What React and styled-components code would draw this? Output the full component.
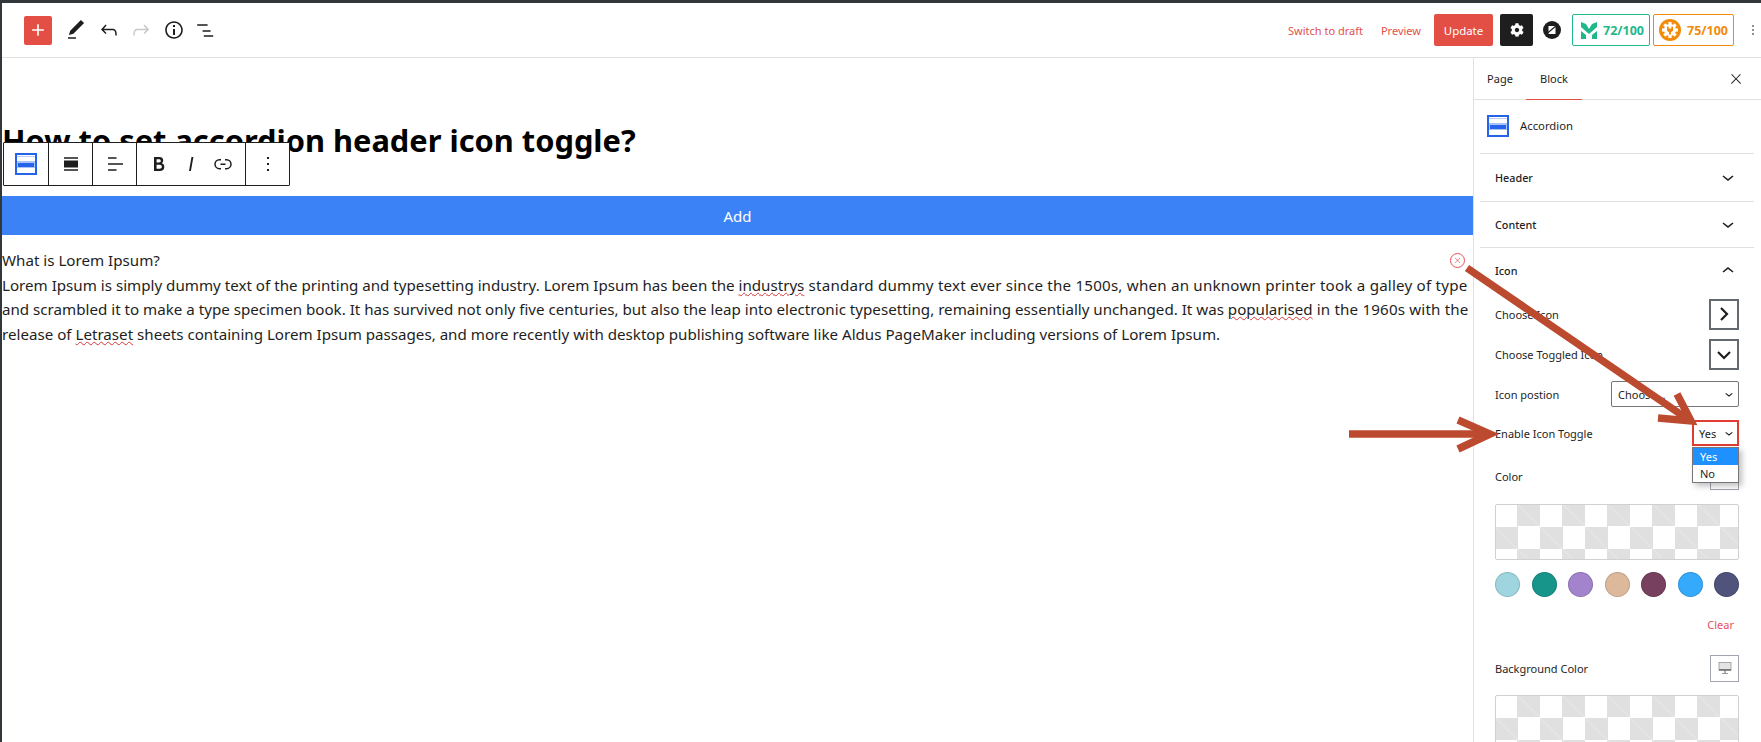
import React from "react";
import styled, { createGlobalStyle } from "styled-components";
import { FaCog } from "react-icons/fa";

const Global = createGlobalStyle`
  html, body { margin: 0; padding: 0; background: #fff; }
  body { font-family: "Noto Sans", "Open Sans", sans-serif; color: #1e1e1e; overflow: hidden; }
  * { box-sizing: border-box; }
`;

const Icon = ({ d, size = 24, color = "currentColor" }) => (
  <svg width={size} height={size} viewBox="0 0 24 24" fill={color}><path d={d} /></svg>
);

const icons = {
  edit: "M20.1 5.1L16.9 2 6.2 12.7l-1.3 4.4 4.5-1.3L20.1 5.1zM4 20.8h8v-1.5H4v1.5z",
  undo: "M18.3 11.7c-.6-.6-1.4-.9-2.3-.9H6.7l2.9-3.3-1.1-1-4.5 5L8.5 16l1-1-2.7-2.7H16c.5 0 .9.2 1.3.5 1 1 1 3.4 1 4.5v.3h1.5v-.2c0-1.5 0-4.3-1.5-5.7z",
  redo: "M15.6 6.5l-1.1 1 2.9 3.3H8c-.9 0-1.7.3-2.3.9-1.4 1.5-1.4 4.2-1.4 5.6v.2h1.5v-.3c0-1.1 0-3.5 1-4.5.3-.3.7-.5 1.3-.5h9.2L14.5 15l1.1 1.1 4.6-4.6-4.6-5z",
  info: "M12 3.2c-4.8 0-8.8 3.9-8.8 8.8 0 4.8 3.9 8.8 8.8 8.8 4.8 0 8.8-3.9 8.8-8.8 0-4.8-4-8.8-8.8-8.8zm0 16c-4 0-7.2-3.3-7.2-7.2C4.8 8 8 4.8 12 4.8s7.2 3.3 7.2 7.2c0 4-3.2 7.2-7.2 7.2zM11 17h2v-6h-2v6zm0-8h2V7h-2v2z",
  list: "M3.2 6.2h10.4v1.5H3.2zM8.6 12.2h8v1.5h-8zM9.8 17.2h9.4v1.5H9.8z",
  plus: "M11 5h2v6h6v2h-6v6h-2v-6H5v-2h6z",
  more: "M13 19h-2v-2h2v2zm0-6h-2v-2h2v2zm0-6h-2V5h2v2z",
  bold: "M14.7 11.3c1-.6 1.5-1.6 1.5-3 0-2.3-1.3-3.4-4-3.4H7v14h5.8c1.4 0 2.5-.3 3.3-1 .8-.7 1.2-1.7 1.2-2.9.1-1.9-.8-3.1-2.6-3.7zm-5.1-4h2.3c.6 0 1.1.1 1.4.4.3.3.5.7.5 1.2s-.2 1-.5 1.2c-.3.3-.8.4-1.4.4H9.6V7.3zm4.6 9c-.4.3-1 .4-1.7.4H9.6v-3.9h2.9c.7 0 1.3.2 1.7.5.4.3.6.8.6 1.5s-.2 1.2-.6 1.5z",
  italic: "M12.5 5L10 19h1.9l2.5-14z",
  link: "M10 17.389H8.444A5.194 5.194 0 1 1 8.444 7H10v1.5H8.444a3.694 3.694 0 0 0 0 7.389H10v1.5ZM14 7h1.556a5.194 5.194 0 0 1 0 10.39H14v-1.5h1.556a3.694 3.694 0 0 0 0-7.39H14V7Zm-4.5 6h5v-1.5h-5V13Z",
  close: "M13 11.8l6.1-6.3-1-1-6.1 6.2-6.1-6.2-1 1 6.1 6.3-6.5 6.7 1 1 6.5-6.6 6.5 6.6 1-1z",
  down: "M17.5 11.6L12 16l-5.5-4.4.9-1.2L12 14l4.5-3.6 1 1.2z",
  up: "M6.5 12.4L12 8l5.5 4.4-.9 1.2L12 10l-4.5 3.6-1-1.2z",
  blockWide: "M5 5.2h14v1.5H5zM5 8.5h14v7H5zM5 17.3h14v1.5H5z",
  alignLeft: "M5 5.2h8.5v1.5H5zM5 11.2h15v1.5H5zM5 17.3h8.5v1.5H5z",
};

const Page = styled.div`
  position: relative;
  width: 1761px;
  height: 742px;
  overflow: hidden;
  border-top: 3px solid #32373c;
  border-left: 2px solid #32373c;
`;

const Header = styled.header`
  height: 55px;
  border-bottom: 1px solid #e0e0e0;
  display: flex;
  align-items: center;
  justify-content: space-between;
  padding: 0 0 0 22px;
`;

const Tools = styled.div`
  display: flex;
  align-items: center;
`;

const AddButton = styled.div`
  width: 28px;
  height: 29px;
  border-radius: 2px;
  background: #e34f45;
  color: #fff;
  display: flex;
  align-items: center;
  justify-content: center;
  margin-right: 8px;
`;

const ToolIcon = styled.div`
  width: 32.5px;
  display: flex;
  justify-content: center;
  color: ${(p) => (p.$off ? "#c9c9c9" : "#1e1e1e")};
`;

const Actions = styled.div`
  display: flex;
  align-items: center;
`;

const LinkText = styled.span`
  font-size: 11px;
  color: #e2504c;
  margin-right: ${(p) => p.$gap}px;
`;

const UpdateButton = styled.div`
  width: 59px;
  height: 32px;
  border-radius: 2px;
  background: #e34f45;
  color: #fff;
  font-size: 11.4px;
  display: flex;
  align-items: center;
  justify-content: center;
  margin-right: 7px;
`;

const GearButton = styled.div`
  width: 33px;
  height: 32px;
  border-radius: 2px;
  background: #1e1e1e;
  color: #fff;
  display: flex;
  align-items: center;
  justify-content: center;
  margin-right: 10px;
`;

const ScoreBox = styled.div`
  height: 32px;
  width: ${(p) => p.$w}px;
  border: 1px solid ${(p) => p.$color};
  border-radius: 2px;
  color: ${(p) => p.$color};
  font-size: 12.5px;
  font-weight: 700;
  display: flex;
  align-items: center;
  justify-content: space-between;
  padding: 0 5px 0 ${(p) => p.$pad}px;
  margin-right: ${(p) => p.$gap}px;
`;

const MoreDots = styled.div`
  width: 16px;
  display: flex;
  justify-content: center;
`;

const Main = styled.div`
  display: flex;
  height: 684px;
`;

const Editor = styled.main`
  flex: 1;
  min-width: 0;
  padding-top: 60px;
`;

const Title = styled.h1`
  position: relative;
  margin: 0;
  font-size: 30.8px;
  line-height: 44px;
  font-weight: 700;
  color: #000;
  white-space: nowrap;
`;

const BlockToolbar = styled.div`
  position: absolute;
  left: 1px;
  top: 24px;
  height: 44px;
  display: flex;
  background: #fff;
  border: 1px solid #1e1e1e;
  border-radius: 1px;
`;

const ToolCell = styled.div`
  width: ${(p) => p.$w}px;
  display: flex;
  align-items: center;
  justify-content: center;
  gap: 8px;
  color: #1e1e1e;
  & + & { border-left: 1px solid #1e1e1e; }
`;

const AddBar = styled.div`
  margin-top: 34px;
  height: 39px;
  background: #3b82f6;
  color: #fff;
  font-size: 15px;
  display: flex;
  align-items: center;
  justify-content: center;
`;

const Body = styled.div`
  position: relative;
  padding-top: 13px;
  font-size: 15.15px;
  line-height: 24.7px;
  color: #1e1e1e;
  white-space: nowrap;
`;

const Wavy = styled.span`
  text-decoration: underline wavy #d63638 1px;
`;

const Stretched = styled.span`
  letter-spacing: ${(p) => p.$by}px;
`;

const RemoveMark = styled.div`
  position: absolute;
  right: 8px;
  top: 18px;
  width: 15px;
  height: 15px;
  border: 1px solid #e8505b;
  border-radius: 50%;
  color: #e8505b;
  display: flex;
  align-items: center;
  justify-content: center;
`;

const Sidebar = styled.aside`
  width: 288px;
  flex: none;
  border-left: 1px solid #e0e0e0;
  font-size: 11px;
`;

const Tabs = styled.div`
  height: 42px;
  border-bottom: 1px solid #e0e0e0;
  display: flex;
  align-items: stretch;
  padding: 0 17px 0 0;
`;

const Tab = styled.div`
  width: ${(p) => p.$w}px;
  display: flex;
  align-items: center;
  justify-content: center;
  font-size: 11px;
  margin-bottom: -1px;
  border-bottom: 1px solid ${(p) => (p.$on ? "#e34f45" : "transparent")};
`;

const CloseBox = styled.div`
  margin-left: auto;
  display: flex;
  align-items: center;
`;

const BlockCard = styled.div`
  height: 54px;
  margin: 0 7px 0 6px;
  padding: 0 0 2px 7px;
  display: flex;
  align-items: center;
  gap: 11px;
  font-size: 11.3px;
  border-bottom: 1px solid #e0e0e0;
`;

const Panel = styled.div`
  margin: 0 7px 0 6px;
  height: 46.5px;
  padding: 0 14px 0 15px;
  display: flex;
  align-items: center;
  justify-content: space-between;
  font-size: 10.8px;
  font-weight: 500;
  & + & { border-top: 1px solid #e0e0e0; }
`;

const PanelBody = styled.div`
  margin: 0 7px;
  padding: 0 15px 0 14px;
  display: flex;
  flex-direction: column;
`;

const Row = styled.div`
  height: ${(p) => p.$h}px;
  padding-bottom: ${(p) => p.$pb || 0}px;
  flex: none;
  display: flex;
  align-items: center;
  justify-content: space-between;
`;

const IconPick = styled.div`
  width: 30px;
  height: 31px;
  border: 2px solid #646970;
  display: flex;
  align-items: center;
  justify-content: center;
  color: #1e1e1e;
`;

const Select = styled.div`
  position: relative;
  width: ${(p) => p.$w}px;
  height: 26px;
  padding: 0 1px 0 6px;
  border: ${(p) => (p.$open ? "1px solid #e03c31" : "1px solid #757575")};
  border-radius: ${(p) => (p.$open ? 0 : 2)}px;
  display: flex;
  align-items: center;
  justify-content: space-between;
  outline: ${(p) => (p.$open ? "1px solid #e03c31" : "none")};
  outline-offset: -2px;
`;

const Options = styled.div`
  position: absolute;
  left: -1px;
  right: -1px;
  top: 26px;
  background: #fff;
  border: 1px solid #767676;
  box-shadow: 3px 3px 6px rgba(0, 0, 0, 0.25);
  z-index: 2;
`;

const Option = styled.div`
  height: 17px;
  padding-left: 7px;
  display: flex;
  align-items: center;
  color: ${(p) => (p.$on ? "#fff" : "#1e1e1e")};
  background: ${(p) => (p.$on ? "#1e90ff" : "transparent")};
`;

const DeviceButton = styled.div`
  width: 29px;
  height: 27px;
  border: 1px solid #a0a5b0;
  display: flex;
  align-items: center;
  justify-content: center;
`;

const Checker = styled.div`
  height: ${(p) => p.$h}px;
  flex: none;
  border: 1px solid #d0d0d0;
  border-radius: 2px;
  background-color: #fff;
  background-image:
    linear-gradient(45deg, transparent 49.5%, rgba(255, 255, 255, 0.3) 49.5%, rgba(255, 255, 255, 0.3) 50.5%, transparent 50.5%),
    repeating-conic-gradient(#e0e0e0 0 25%, #fff 0 50%);
  background-size: 45px 45px;
  background-position: 22.5px 0, 0 0;
  background-origin: border-box;
`;

const Swatches = styled.div`
  display: flex;
  justify-content: space-between;
  margin-top: 12px;
`;

const Swatch = styled.div`
  width: 25px;
  height: 25px;
  border-radius: 50%;
  background: ${(p) => p.$color};
  box-shadow: inset 0 0 0 1px rgba(0, 0, 0, 0.14);
`;

const ClearLink = styled.div`
  align-self: flex-end;
  margin: 20px 5px 8px 0;
  color: #e8505b;
  font-size: 11px;
  line-height: 16px;
`;

const Notes = styled.svg`
  position: absolute;
  left: -2px;
  top: -3px;
  pointer-events: none;
  z-index: 3;
`;

const EdgeMark = styled.div`
  position: absolute;
  left: -2px;
  top: ${(p) => p.$top}px;
  width: 2px;
  height: ${(p) => p.$h}px;
  background: #e34f45;
`;

const AccordionIcon = () => (
  <svg width="22" height="22" viewBox="0 0 22 22">
    <rect x="1" y="1" width="20" height="20" fill="#fff" stroke="#2563eb" strokeWidth="2" />
    <rect x="2" y="3" width="18" height="1" fill="#bcd0f7" />
    <rect x="2" y="8" width="18" height="7" fill="#a9c3f5" />
    <rect x="3" y="10" width="16" height="4" fill="#2563eb" />
  </svg>
);

const GreenMark = () => (
  <svg width="16" height="17" viewBox="0 0 16 17" fill="#1fb88a">
    <path d="M0 0l5 2 3 5 3-5 5-2v5l-8 7-8-7z" />
    <path d="M0 9l5 4v4H0zM16 9v8h-5v-4z" />
  </svg>
);

const OrangeMark = () => (
  <svg width="22" height="22" viewBox="0 0 22 22">
    <circle cx="11" cy="11" r="11" fill="#f28a0a" />
    <g fill="#fff">
      <circle cx="11" cy="11" r="6" />
      {[0, 45, 90, 135, 180, 225, 270, 315].map((a) => (
        <rect key={a} x="9.4" y="3" width="3.2" height="4" transform={`rotate(${a} 11 11)`} />
      ))}
    </g>
    <path d="M8 7.5h1.6v2h2.8v-2H14v4.2l-2 1.5v2.3h-2v-2.3l-2-1.5z" fill="#f28a0a" />
  </svg>
);

const ZeroMark = () => (
  <svg width="18" height="18" viewBox="0 0 18 18" style={{ marginRight: 11 }}>
    <circle cx="9" cy="9" r="9" fill="#1e1e1e" />
    <path d="M5.5 5h7v1.6L7.5 11.5 5.5 13zM12.5 13h-7v-.4l7-6z" fill="#fff" />
    <path d="M4 12.5L13.5 4.5" stroke="#1e1e1e" strokeWidth="1.2" />
  </svg>
);

const Device = () => (
  <svg width="14" height="14" viewBox="0 0 14 14">
    <rect x="1" y="1.5" width="12" height="8" fill="#e4e4e4" stroke="#8a8a8a" strokeWidth="0.7" />
    <path d="M1 8h12v1.5H1zM4 12h6v.8H4zM6.4 9.5h1.2V12H6.4z" fill="#777" />
  </svg>
);

const Chevron = ({ dir = "down", size = 24 }) => <Icon d={icons[dir]} size={size} />;

const App = () => (
  <>
    <Global />
    <Page>
      <Header>
        <Tools>
          <AddButton><Icon d={icons.plus} size={20} /></AddButton>
          <ToolIcon><Icon d={icons.edit} /></ToolIcon>
          <ToolIcon><Icon d={icons.undo} /></ToolIcon>
          <ToolIcon $off><Icon d={icons.redo} /></ToolIcon>
          <ToolIcon><Icon d={icons.info} /></ToolIcon>
          <ToolIcon><Icon d={icons.list} /></ToolIcon>
        </Tools>
        <Actions>
          <LinkText $gap={18}>Switch to draft</LinkText>
          <LinkText $gap={13}>Preview</LinkText>
          <UpdateButton>Update</UpdateButton>
          <GearButton><FaCog size={14} /></GearButton>
          <ZeroMark />
          <ScoreBox $w={78} $color="#1fb88a" $pad={8} $gap={3}><GreenMark />72/100</ScoreBox>
          <ScoreBox $w={81} $color="#f28a0a" $pad={5} $gap={11}><OrangeMark />75/100</ScoreBox>
          <MoreDots><Icon d={icons.more} /></MoreDots>
        </Actions>
      </Header>
      <Main>
        <Editor>
          <Title>
            How to set accordion header icon toggle?
            <BlockToolbar>
              <ToolCell $w={44}><AccordionIcon /></ToolCell>
              <ToolCell $w={44}><Icon d={icons.blockWide} /></ToolCell>
              <ToolCell $w={44}><Icon d={icons.alignLeft} /></ToolCell>
              <ToolCell $w={109}>
                <Icon d={icons.bold} />
                <Icon d={icons.italic} />
                <Icon d={icons.link} />
              </ToolCell>
              <ToolCell $w={44}><Icon d={icons.more} /></ToolCell>
            </BlockToolbar>
          </Title>
          <AddBar>Add</AddBar>
          <Body>
            What is Lorem Ipsum?<br />
            Lorem Ipsum is simply dummy text of the printing and typesetting industry. Lorem Ipsum has been the <Wavy>industrys</Wavy><Stretched $by={0.21}> standard dummy text ever since the 1500s, when an unknown printer took a galley of type</Stretched><br />
            and scrambled it to make a type specimen book. It has survived not only five centuries, but also the leap into electronic typesetting, remaining essentially unchanged. It was <Wavy>popularised</Wavy><Stretched $by={0.17}> in the 1960s with the</Stretched><br />
            release of <Wavy>Letraset</Wavy> sheets containing Lorem Ipsum passages, and more recently with desktop publishing software like Aldus PageMaker including versions of Lorem Ipsum.
            <RemoveMark><Icon d={icons.close} size={9} /></RemoveMark>
          </Body>
        </Editor>
        <Sidebar>
          <Tabs>
            <Tab $w={52}>Page</Tab>
            <Tab $w={56} $on>Block</Tab>
            <CloseBox><Icon d={icons.close} size={16} /></CloseBox>
          </Tabs>
          <BlockCard><AccordionIcon />Accordion</BlockCard>
          <Panel>Header<Chevron /></Panel>
          <Panel>Content<Chevron /></Panel>
          <Panel>Icon<Chevron dir="up" /></Panel>
          <PanelBody>
            <Row $h={41.5}>Choose Icon
              <IconPick><svg width="16" height="16" viewBox="0 0 16 16" fill="none" stroke="#1e1e1e" strokeWidth="2.2"><path d="M5 2l6 6-6 6" /></svg></IconPick>
            </Row>
            <Row $h={39}>Choose Toggled Icon
              <IconPick><svg width="16" height="16" viewBox="0 0 16 16" fill="none" stroke="#1e1e1e" strokeWidth="2.2"><path d="M2 5l6 6 6-6" /></svg></IconPick>
            </Row>
            <Row $h={40}>Icon postion
              <Select $w={128}>Choose...<Chevron size={16} /></Select>
            </Row>
            <Row $h={38}>Enable Icon Toggle
              <Select $w={47} $open>Yes<Chevron size={16} />
                <Options>
                  <Option $on>Yes</Option>
                  <Option>No</Option>
                </Options>
              </Select>
            </Row>
            <Row $h={52} $pb={4}>Color
              <DeviceButton><Device /></DeviceButton>
            </Row>
            <Checker $h={56} />
            <Swatches>
              {["#9ed5df", "#17958a", "#a283cc", "#dcb99b", "#78405f", "#35a9fb", "#50537c"].map((c) => (
                <Swatch key={c} $color={c} />
              ))}
            </Swatches>
            <ClearLink>Clear</ClearLink>
            <Row $h={54}>Background Color
              <DeviceButton><Device /></DeviceButton>
            </Row>
            <Checker $h={56} />
          </PanelBody>
        </Sidebar>
      </Main>
      <EdgeMark $top={174} $h={9} />
      <EdgeMark $top={193} $h={12} />
      <Notes width="1761" height="742" viewBox="0 0 1761 742" fill="none" stroke="#bc4a2f" strokeWidth="7.5">
        <path d="M1467 268L1689 420" />
        <path d="M1677 394L1691 421L1658 418" />
        <path d="M1349 434H1488" />
        <path d="M1458 420L1490 434L1458 449" />
      </Notes>
    </Page>
  </>
);

export default App;
